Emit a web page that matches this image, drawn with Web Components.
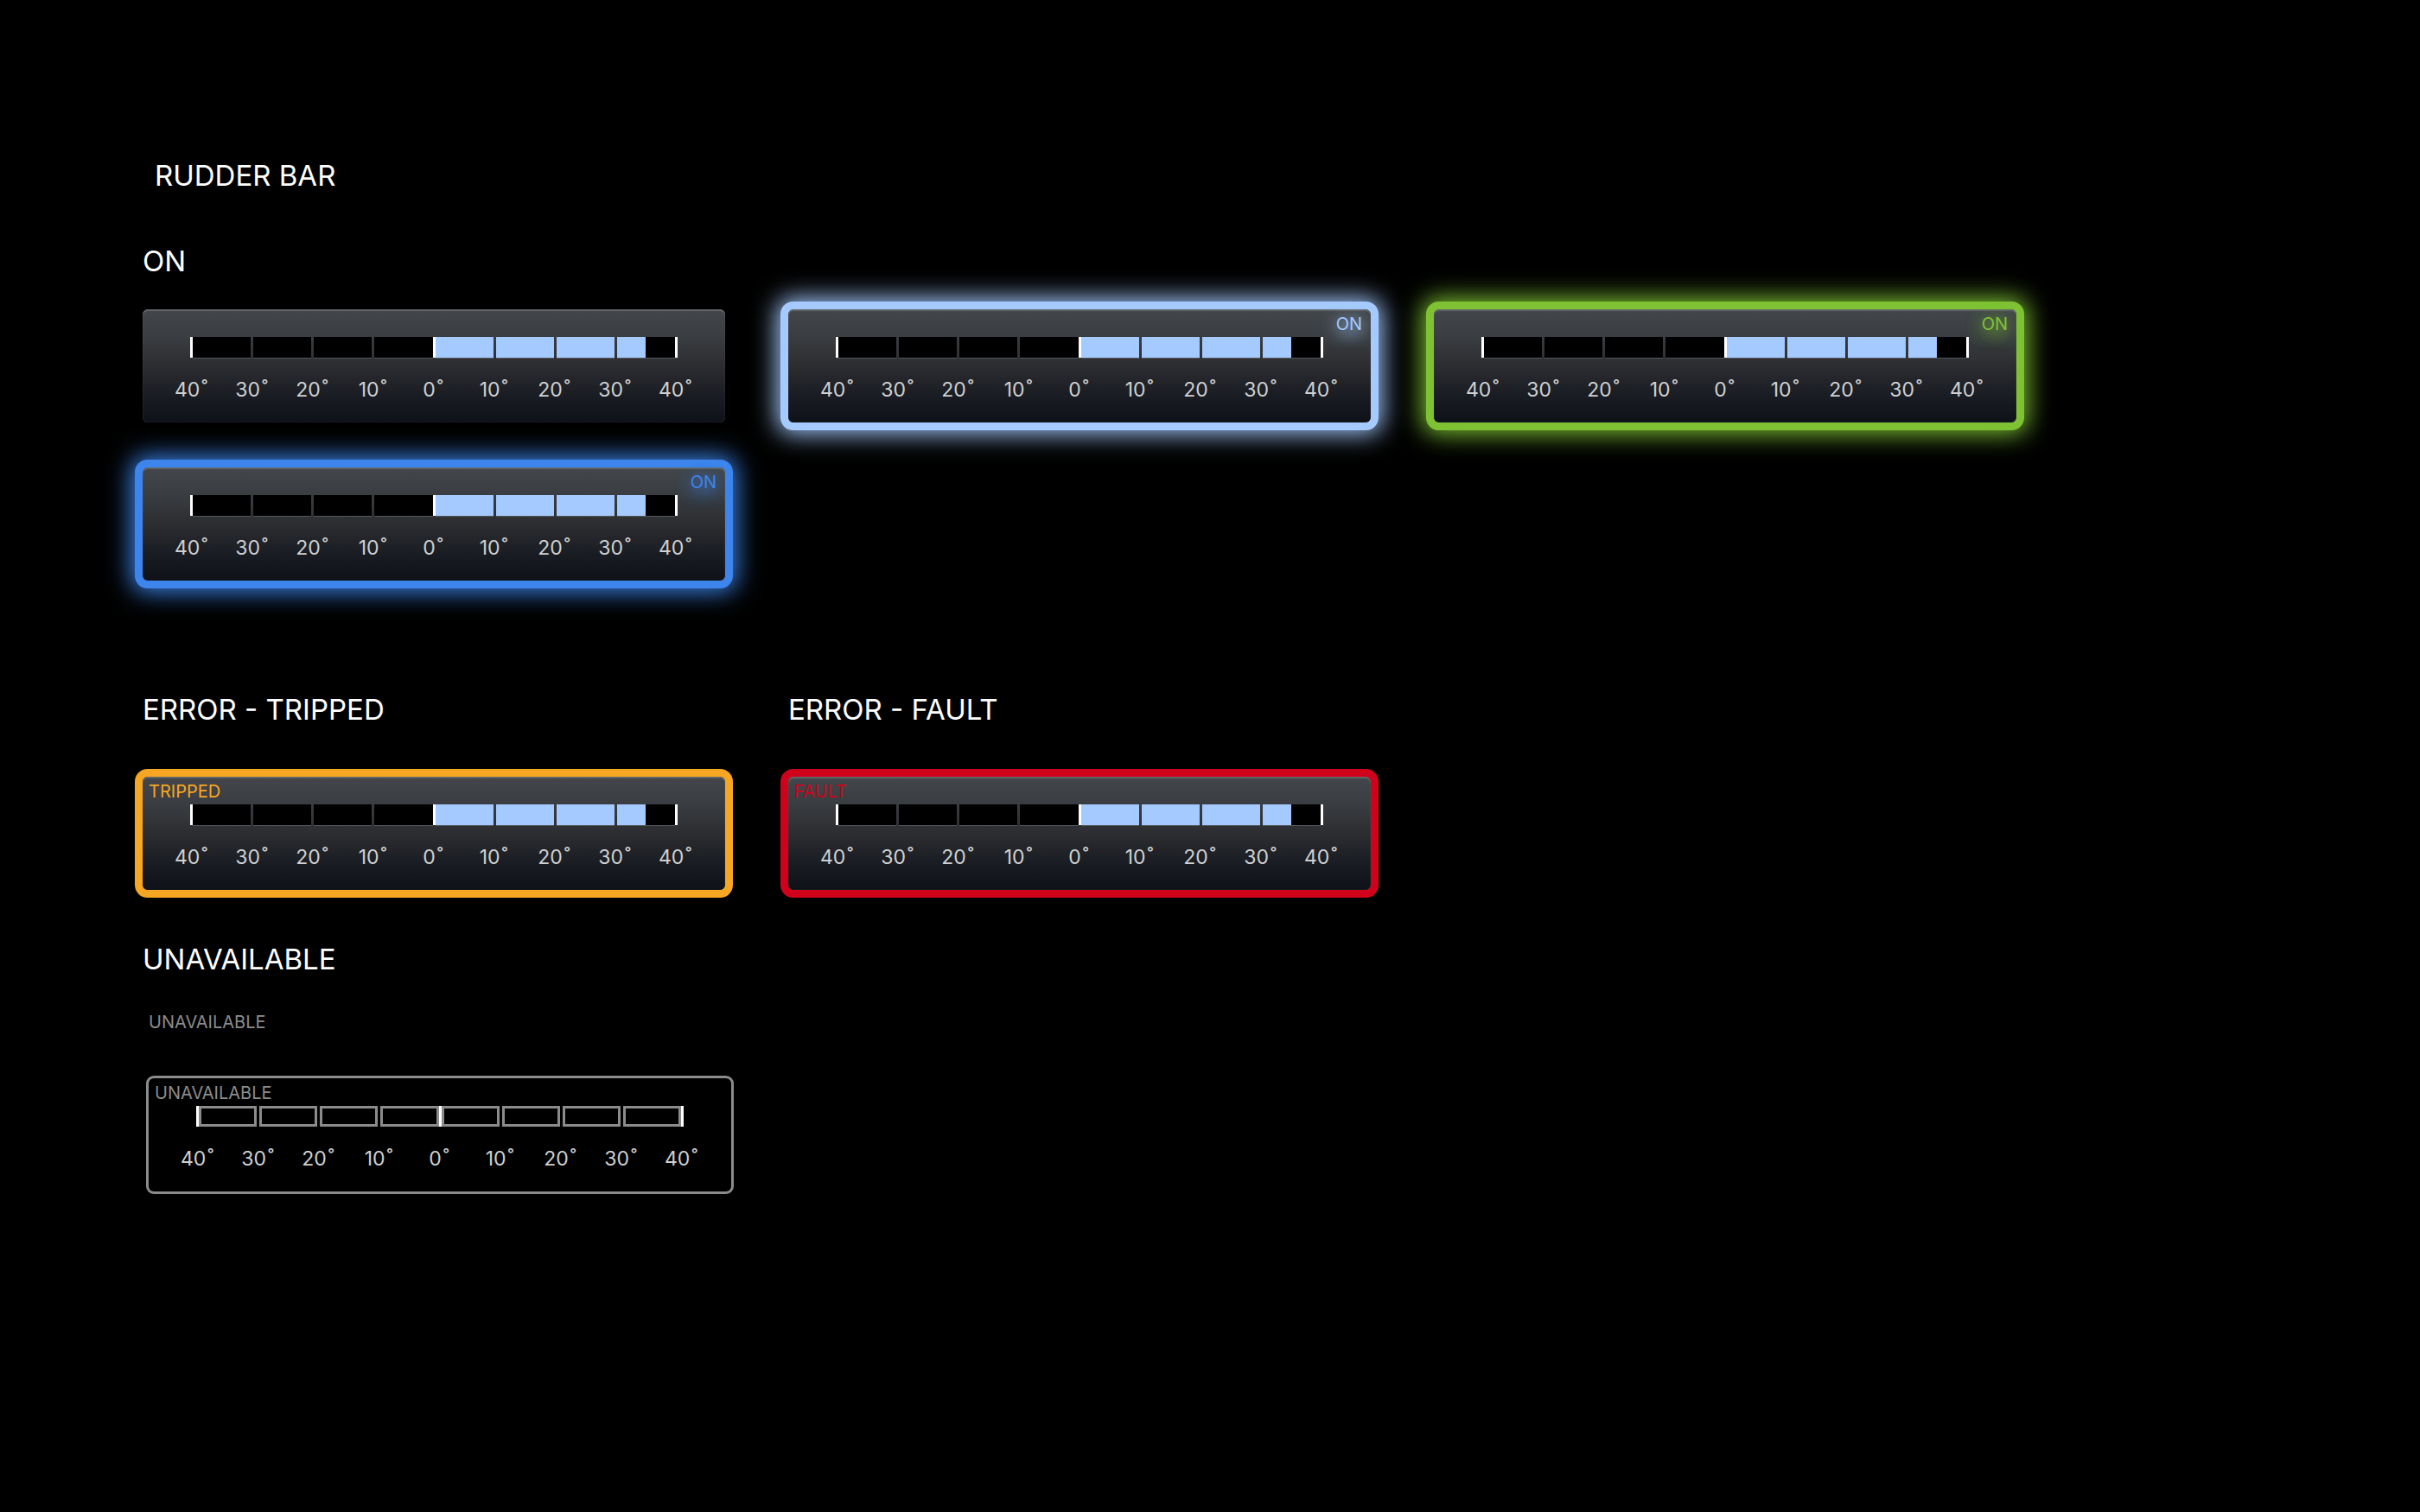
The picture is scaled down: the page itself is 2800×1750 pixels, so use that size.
<!DOCTYPE html>
<html lang="en">
<head>
<meta charset="utf-8">
<title>Rudder bar</title>
<style>
  html { background: #000; }
  body { margin: 0; color: #fff; font-family: Inter, "Liberation Sans", sans-serif; }
</style>
</head>
<body>
<rudder-board></rudder-board>

<template id="rudder-bar-template">
  <style>
    :host {
      display: block;
      position: relative;
      box-sizing: border-box;
      height: 131px;
      padding-top: 32px;
      border-radius: 6px;
      background: linear-gradient(#43474b 0%, #393c40 25%, #2b2c30 52%, #1a1d23 75%, #0e1118 100%);
      box-shadow: inset 0 2px 1px rgba(255, 255, 255, .16), inset 0 0 1px rgba(255, 255, 255, .3), var(--ring, 0 0 transparent);
    }
    :host([state="on"]) { --ring: 0 0 0 9px var(--tone), 0 0 28px 13px var(--tone); }
    :host([state="error"]) { --ring: 0 0 0 9px var(--tone); }
    :host([state="unavailable"]) { background: none; box-shadow: 0 0 0 3px #8b8b8b; }
    :host([state="label"]) { height: 30px; padding: 0; background: none; box-shadow: none; }
    :host([state="label"]) .track, :host([state="label"]) .scale { display: none; }
    .status {
      position: absolute;
      top: 5px;
      left: 7px;
      font-size: 20px;
      line-height: 24px;
      color: var(--tone, #8b8b8b);
    }
    :host([state="on"]) .status {
      left: auto;
      right: 10px;
      text-shadow: 0 4px 20px var(--tone), 0 4px 20px var(--tone);
    }
    .track { display: flex; height: 24px; padding: 0 55px; }
    .tick { flex: none; width: 3px; }
    .tick.major { background: #fff; }
    .cell { flex: 1; background: #000; box-shadow: 0 1px 0 #54575b; }
    .fill { height: 100%; background: #a5caff; }
    :host([state="unavailable"]) .cell { box-sizing: border-box; border: 3px solid #8b8b8b; box-shadow: none; }
    .scale { display: flex; padding: 23px 23px 0 21px; font-size: 23px; line-height: 28px; color: #cfd0d1; }
    .scale span { flex: 1; text-align: center; }
    .scale sup { font-size: 23px; line-height: 0; vertical-align: 1px; margin-left: 2px; }
  </style>
  <div class="status"><slot></slot></div>
  <div class="track"></div>
  <div class="scale"></div>
</template>

<template id="rudder-board-template">
  <style>
    :host { display: block; padding: 183px 165px 120px; }
    h1, h2 { margin: 0; font-size: 33px; line-height: 40px; font-weight: 400; }
    h1 { padding-left: 14px; margin-bottom: 59px; }
    .grid { display: grid; grid-template-columns: repeat(auto-fill, 674px); column-gap: 73px; row-gap: 52px; }
    .on { margin-top: 36px; margin-bottom: 129px; }
    .errors { margin-bottom: 60px; }
    .errors div { display: grid; row-gap: 58px; }
    .unavailable { grid-template-columns: 674px; margin-top: 36px; }
    .inset { margin: 0 -7px 0 7px; }
  </style>
  <h1>RUDDER BAR</h1>
  <h2>ON</h2>
  <div class="grid on">
    <rudder-bar value="35"></rudder-bar>
    <rudder-bar value="35" state="on" tone="#a5caff">ON</rudder-bar>
    <rudder-bar value="35" state="on" tone="#7ec234">ON</rudder-bar>
    <rudder-bar value="35" state="on" tone="#3d85ec">ON</rudder-bar>
  </div>
  <div class="grid errors">
    <div><h2>ERROR - TRIPPED</h2><rudder-bar value="35" state="error" tone="#f6a623">TRIPPED</rudder-bar></div>
    <div><h2>ERROR - FAULT</h2><rudder-bar value="35" state="error" tone="#d0021b">FAULT</rudder-bar></div>
  </div>
  <h2>UNAVAILABLE</h2>
  <div class="grid unavailable">
    <rudder-bar state="label">UNAVAILABLE</rudder-bar>
    <rudder-bar class="inset" value="0" state="unavailable">UNAVAILABLE</rudder-bar>
  </div>
</template>

<script>
  class RudderBar extends HTMLElement {
    connectedCallback() {
      if (this.shadowRoot) return;
      const root = this.attachShadow({ mode: "open" });
      root.append(document.getElementById("rudder-bar-template").content.cloneNode(true));
      const tone = this.getAttribute("tone");
      if (tone) this.style.setProperty("--tone", tone);
      const value = Number(this.getAttribute("value") || 0);
      const track = root.querySelector(".track");
      const scale = root.querySelector(".scale");
      if (this.getAttribute("state") === "label") return;
      for (let angle = -40; angle <= 40; angle += 10) {
        const tick = document.createElement("div");
        tick.className = angle % 40 === 0 ? "tick major" : "tick";
        track.append(tick);
        const label = document.createElement("span");
        const degree = document.createElement("sup");
        degree.textContent = "\u02DA";
        label.append(String(Math.abs(angle)), degree);
        scale.append(label);
        if (angle === 40) break;
        const cell = document.createElement("div");
        cell.className = "cell";
        const part = angle < 0 ? 0 : Math.min(1, Math.max(0, (value - angle) / 10));
        if (part > 0) {
          const fill = document.createElement("div");
          fill.className = "fill";
          fill.style.width = part * 100 + "%";
          cell.append(fill);
        }
        track.append(cell);
      }
    }
  }
  class RudderBoard extends HTMLElement {
    connectedCallback() {
      if (this.shadowRoot) return;
      this.attachShadow({ mode: "open" })
        .append(document.getElementById("rudder-board-template").content.cloneNode(true));
    }
  }
  customElements.define("rudder-bar", RudderBar);
  customElements.define("rudder-board", RudderBoard);
</script>
</body>
</html>
